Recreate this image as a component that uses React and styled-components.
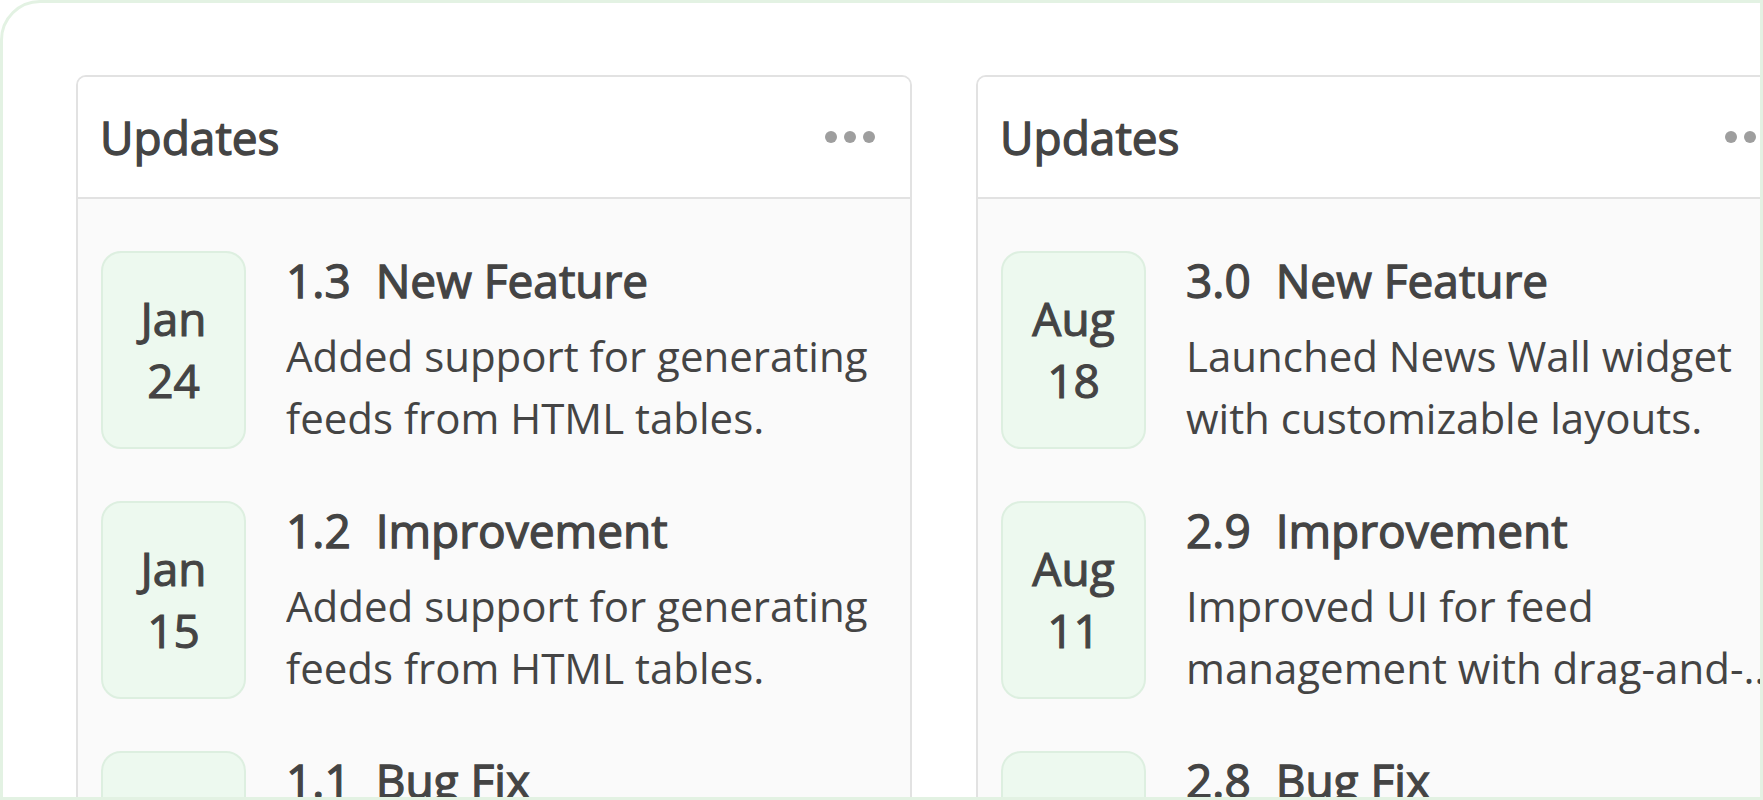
import styled, { createGlobalStyle } from 'styled-components';

const GlobalStyle = createGlobalStyle`
  html, body {
    margin: 0;
    padding: 0;
    background: #ffffff;
  }
  body {
    font-family: "Open Sans", "Noto Sans", "Liberation Sans", sans-serif;
    color: #444444;
  }
`;

const Frame = styled.div`
  box-sizing: border-box;
  width: 1763px;
  height: 800px;
  border: 3px solid #e3f2e3;
  border-top-left-radius: 40px;
  background: #ffffff;
  overflow: hidden;
  padding: 72px 0 0 73px;
`;

const Board = styled.div`
  display: flex;
  gap: 64px;
  align-items: flex-start;
`;

const Card = styled.section`
  flex: 0 0 836px;
  box-sizing: border-box;
  border: 2px solid #e2e2e2;
  border-radius: 10px;
  background: #fafafa;
  overflow: hidden;
`;

const CardHeader = styled.header`
  display: flex;
  align-items: center;
  justify-content: space-between;
  height: 120px;
  padding: 0 35px 0 22px;
  background: #ffffff;
  border-bottom: 2px solid #e2e2e2;
`;

/* medium weight: regular face with a thin stroke on top */
const CardTitle = styled.h2`
  margin: 0;
  font-size: 46px;
  font-weight: 400;
  -webkit-text-stroke: 1.3px #444444;
  line-height: 62px;
  color: #444444;
`;

const MoreButton = styled.button`
  display: flex;
  gap: 7px;
  padding: 0;
  border: 0;
  background: none;
  cursor: pointer;
`;

const Dot = styled.span`
  width: 12px;
  height: 12px;
  border-radius: 50%;
  background: #9e9e9e;
`;

const CardBody = styled.div`
  display: flex;
  flex-direction: column;
  gap: 52px;
  padding: 52px 23px;
`;

const Entry = styled.article`
  display: flex;
  gap: 40px;
  align-items: flex-start;
`;

const DateBadge = styled.div`
  flex: 0 0 145px;
  box-sizing: border-box;
  height: 198px;
  display: flex;
  flex-direction: column;
  align-items: center;
  justify-content: center;
  border: 2px solid #ddefe0;
  border-radius: 20px;
  background: #edf9ef;
  font-size: 46px;
  font-weight: 400;
  -webkit-text-stroke: 1.1px #444444;
  line-height: 62px;
  color: #444444;
  padding-bottom: 3px;
`;

const EntryText = styled.div`
  flex: 1;
  min-width: 0;
`;

const EntryTitle = styled.h3`
  margin: 0 0 16px;
  font-size: 46px;
  font-weight: 400;
  -webkit-text-stroke: 1.3px #444444;
  line-height: 58px;
  color: #444444;
  white-space: nowrap;
`;

const Version = styled.span`
  margin-right: 25px;
`;

const Description = styled.p`
  margin: 0;
  font-size: 42px;
  font-weight: 400;
  line-height: 62px;
  color: #444444;
  display: -webkit-box;
  -webkit-box-orient: vertical;
  -webkit-line-clamp: 2;
  overflow: hidden;
`;

const boards = [
  {
    title: 'Updates',
    entries: [
      { month: 'Jan', day: '24', version: '1.3', kind: 'New Feature', text: 'Added support for generating feeds from HTML tables.' },
      { month: 'Jan', day: '15', version: '1.2', kind: 'Improvement', text: 'Added support for generating feeds from HTML tables.' },
      { month: 'Jan', day: '08', version: '1.1', kind: 'Bug Fix', text: 'Fixed an issue with feed refresh intervals.' },
    ],
  },
  {
    title: 'Updates',
    entries: [
      { month: 'Aug', day: '18', version: '3.0', kind: 'New Feature', text: 'Launched News Wall widget with customizable layouts.' },
      { month: 'Aug', day: '11', version: '2.9', kind: 'Improvement', text: 'Improved UI for feed management with drag-and-drop sorting.' },
      { month: 'Aug', day: '04', version: '2.8', kind: 'Bug Fix', text: 'Fixed image previews in RSS items.' },
    ],
  },
];

function UpdatesCard({ title, entries }) {
  return (
    <Card>
      <CardHeader>
        <CardTitle>{title}</CardTitle>
        <MoreButton aria-label="More">
          <Dot />
          <Dot />
          <Dot />
        </MoreButton>
      </CardHeader>
      <CardBody>
        {entries.map((e) => (
          <Entry key={e.version}>
            <DateBadge>
              <span>{e.month}</span>
              <span>{e.day}</span>
            </DateBadge>
            <EntryText>
              <EntryTitle>
                <Version>{e.version}</Version>
                {e.kind}
              </EntryTitle>
              <Description>{e.text}</Description>
            </EntryText>
          </Entry>
        ))}
      </CardBody>
    </Card>
  );
}

export default function App() {
  return (
    <>
      <GlobalStyle />
      <Frame>
        <Board>
          {boards.map((b, i) => (
            <UpdatesCard key={i} {...b} />
          ))}
        </Board>
      </Frame>
    </>
  );
}
